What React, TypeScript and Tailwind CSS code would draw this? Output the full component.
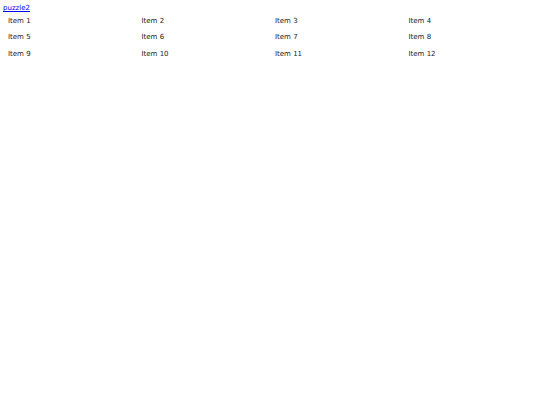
const items = Array.from({ length: 12 }, (_, i) => `Item ${i + 1}`);

export default function App() {
  return (
    <div className="min-h-[405px] w-full bg-white px-[3px] pt-[4px] font-['DejaVu_Sans',Verdana,sans-serif] text-[7px] text-[#222]">
      <a href="#" className="block h-[8.5px] leading-[8px] text-[#0000ee] underline">
        puzzle2
      </a>
      <div className="grid grid-cols-4">
        {items.map((item) => (
          <div key={item} className="flex h-[16.5px] items-center pl-[5px]">
            {item}
          </div>
        ))}
      </div>
    </div>
  );
}
